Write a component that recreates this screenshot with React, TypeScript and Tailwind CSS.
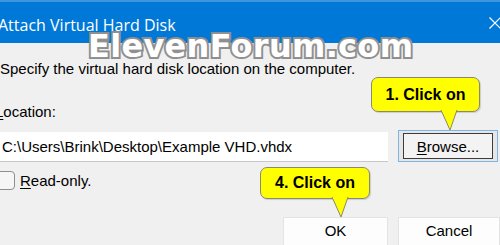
import React from "react";

function Callout({ text, className, tailLeft }: { text: string; className: string; tailLeft: number }) {
  return (
    <div className={"absolute " + className}>
      <div className="relative w-full h-full">
        <div className="absolute inset-0 rounded-[7px] border border-[#8a8a6a] bg-[#ffff00] shadow-[1px_1px_1px_rgba(0,0,0,0.15)]" />
        <svg
          className="absolute"
          style={{ left: tailLeft, top: "calc(100% - 2px)" }}
          width="20"
          height="22"
          viewBox="0 0 20 22"
        >
          <path d="M1 0 L10 20 L17 0" fill="#ffff00" stroke="#8a8a6a" strokeWidth="1" />
          <rect x="2" y="-1" width="14" height="3" fill="#ffff00" />
        </svg>
        <div className="absolute inset-0 flex items-center justify-center font-['Liberation_Sans',Arial,sans-serif] font-bold text-[16px] leading-none text-black">
          {text}
        </div>
      </div>
    </div>
  );
}

export default function App() {
  return (
    <div className="relative w-[500px] h-[245px] overflow-hidden bg-[#f0f0f0] font-['Liberation_Sans',Arial,sans-serif] text-black">
      {/* Title bar */}
      <div className="h-[43px] bg-[#0078d7] border-t-2 border-[#3d95de] flex items-center justify-between">
        <span className="ml-[-2px] mt-[4px] font-['Open_Sans','Noto_Sans',sans-serif] text-[16px] text-white leading-none">
          Attach Virtual Hard Disk
        </span>
        <svg width="12" height="12" viewBox="0 0 12 12" className="mr-[-1px] mt-[1px]">
          <path d="M0.5 0.5 L11.5 11.5 M11.5 0.5 L0.5 11.5" stroke="white" strokeWidth="1.2" />
        </svg>
      </div>

      {/* Body */}
      <div className="mt-[18px] text-[15px] leading-[15px] pl-0">
        Specify the virtual hard disk location on the computer.
      </div>
      <div className="mt-[28px] ml-[-5px] text-[15px] leading-[15px]">
        <span className="underline underline-offset-[2px]">L</span>ocation:
      </div>
      <div className="mt-[11px] flex items-end">
        <div className="w-[388px] h-[30px] bg-white border-b border-[#c8c8c8] flex items-center pl-[2px] text-[15px] leading-none">
          C:\Users\Brink\Desktop\Example VHD.vhdx
        </div>
        <div className="ml-[10px] w-[100px] h-[32px] border border-[#7fb5e6] bg-[#e6e6e6] p-[2px_4px]">
          <div className="w-full h-full border border-[#3c3c3c] bg-[#f3f3f3] flex items-center justify-center text-[15px] leading-none">
            <span className="underline underline-offset-[2px]">B</span>rowse...
          </div>
        </div>
      </div>
      <div className="mt-[9px] flex items-center">
        <div className="ml-[-4px] w-[19px] h-[19px] rounded-[4px] border border-[#8f8f8f] bg-[#f6f6f6]" />
        <span className="ml-[5px] text-[15px] leading-none">
          <span className="underline underline-offset-[2px]">R</span>ead-only.
        </span>
      </div>
      <div className="mt-[27px] flex">
        <div className="ml-[283px] w-[105px] h-[32px] bg-[#fdfdfd] border border-[#e4e4e4] flex justify-center pt-[5px] text-[15px] leading-none">
          OK
        </div>
        <div className="ml-[10px] w-[102px] h-[32px] bg-[#fdfdfd] border border-[#e4e4e4] flex justify-center pt-[5px] text-[15px] leading-none">
          Cancel
        </div>
      </div>

      {/* Watermark */}
      <div className="absolute left-[88px] top-[30px] font-['DejaVu_Sans',Verdana,sans-serif] font-bold text-[32px] leading-none text-white tracking-[0.3px] [-webkit-text-stroke:4px_#8e8e8e] [paint-order:stroke_fill] [text-shadow:0_0_2px_rgba(160,160,160,0.9)]">
        ElevenForum.com
      </div>

      <Callout text="1. Click on" className="left-[371px] top-[77px] w-[109px] h-[35px]" tailLeft={69} />
      <Callout text="4. Click on" className="left-[260px] top-[167px] w-[110px] h-[32px]" tailLeft={71} />
    </div>
  );
}
